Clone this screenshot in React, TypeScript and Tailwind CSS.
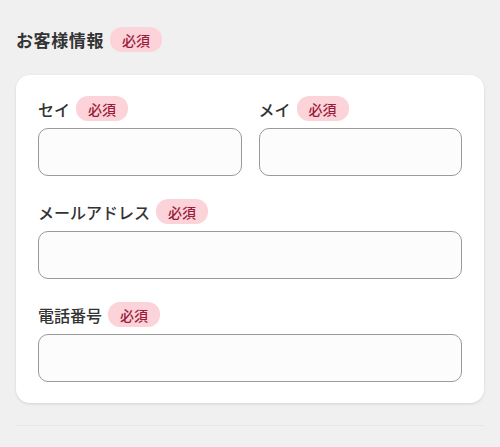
const font = { fontFamily: '"Noto Sans CJK JP", "Noto Sans", sans-serif' };

function Badge() {
  return (
    <span className="inline-flex h-[25px] items-center rounded-[12px] bg-[#fbd3d9] px-[12px] text-[14px] font-medium leading-none text-[#9c1b3b]">
      必須
    </span>
  );
}

function Field({ label }: { label: string }) {
  return (
    <div className="flex flex-col">
      <div className="flex h-[25px] items-center gap-[6px]">
        <span className="text-[16px] font-medium leading-none text-[#333333]">{label}</span>
        <Badge />
      </div>
      <input
        type="text"
        className="mt-[7px] h-[48px] w-full rounded-[10px] border border-[#9a9a9a] bg-[#fcfcfc] px-3 outline-none"
      />
    </div>
  );
}

export default function App() {
  return (
    <div className="min-h-[447px] bg-[#f0f0f0] px-4 pt-[27px]" style={font}>
      <div className="flex h-[25px] items-center gap-[6px]">
        <h2 className="text-[17px] font-bold leading-none tracking-[0.6px] text-[#333333]">お客様情報</h2>
        <Badge />
      </div>

      <div className="mt-[23px] rounded-[14px] bg-white px-[22px] pt-[21px] pb-[21px] shadow-[0_1px_3px_rgba(0,0,0,0.12)]">
        <div className="grid grid-cols-2 gap-x-[17px]">
          <Field label="セイ" />
          <Field label="メイ" />
        </div>
        <div className="mt-[23px]">
          <Field label="メールアドレス" />
        </div>
        <div className="mt-[23px]">
          <Field label="電話番号" />
        </div>
      </div>

      <div className="mt-[22px] border-t border-[#e6e6e6]" />
    </div>
  );
}
